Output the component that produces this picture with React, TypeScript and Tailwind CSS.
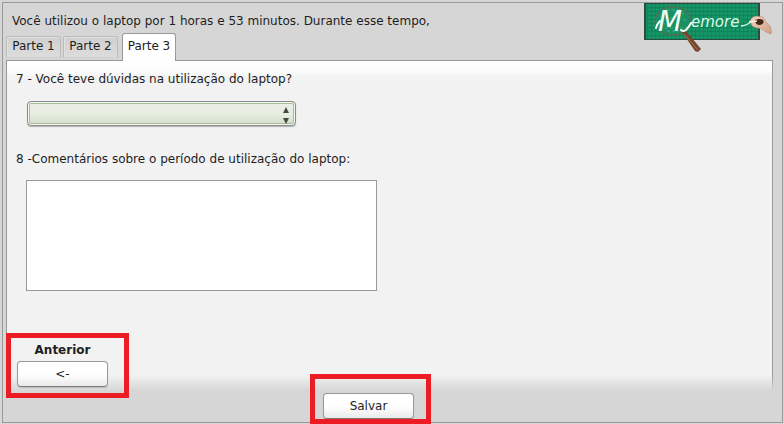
import { useState } from "react";

const tabs = ["Parte 1", "Parte 2"];

const pushButton =
  "h-[26px] w-[91px] rounded-[4px] border border-[#999999] border-b-[#7c7c7c] bg-linear-to-b from-white from-50% to-[#eaeaea] text-[#1e1e1e] shadow-[0_1px_1px_#bdbdbd]";

function Logo() {
  return (
    <svg viewBox="0 0 130 50" className="h-[50px] w-[130px] shrink-0" role="img" aria-label="Memore">
      <defs>
        <pattern id="weave" width="4" height="4" patternUnits="userSpaceOnUse">
          <rect width="4" height="4" fill="#149263" />
          <path d="M0 .5H4M.5 0V4" stroke="#10855b" strokeWidth="1" />
          <path d="M2 2.5H4" stroke="#1c9c6d" strokeWidth="1" />
        </pattern>
        <linearGradient id="skin" x1="0" y1="0" x2="1" y2="1">
          <stop offset="0" stopColor="#f3d3bf" />
          <stop offset="1" stopColor="#cf9f87" />
        </linearGradient>
      </defs>
      <rect x="1" y="0" width="116" height="37" fill="#2c4a3e" />
      <rect x="3" y="1" width="112" height="35" fill="url(#weave)" />
      <ellipse cx="30" cy="18" rx="18" ry="14" fill="#198f64" stroke="#4d7352" strokeWidth="1.4" />
      <g fill="none" stroke="#4aa880" strokeWidth="1" strokeDasharray="3 2">
        <path d="M24 7H37M34 11H41M27 15H32M40 17H43M16 21H22M17 25H44M24 28H36" />
      </g>
      <path d="M39 29 L43 28 L58 46 L55 49 L52 48 Z" fill="#74472c" />
      <path d="M41 31 L55 47" stroke="#a3714d" strokeWidth="1" />
      <text
        x="15"
        y="28"
        fill="#effff6"
        fontSize="28"
        fontStyle="italic"
        style={{ fontFamily: '"DejaVu Sans", sans-serif' }}
      >
        M
      </text>
      <path
        d="M13 25 Q14 21 17 18M38 27 Q40 29 43 27 Q46 24 48 20"
        fill="none"
        stroke="#effff6"
        strokeWidth="2"
        strokeLinecap="round"
      />
      <text
        x="48"
        y="24"
        fill="#dcfaea"
        fontSize="15"
        fontStyle="italic"
        style={{ fontFamily: '"DejaVu Sans", sans-serif' }}
      >
        emore
      </text>
      <path d="M98 23 Q103 23 109 18" fill="none" stroke="#dcfaea" strokeWidth="1.4" />
      <path
        d="M107 18 Q108 14 113 13 L120 14 L123 19 L127 23 Q129 26 128 31 L123 29 Q119 25 114 25 Q108 24 108 20 Z"
        fill="url(#skin)"
        stroke="#a9806d"
        strokeWidth=".5"
      />
      <path d="M112 17 Q117 15 120 17 Q122 21 117 22 Q112 22 112 17 Z" fill="#49261c" />
      <path d="M106 19 L114 18" stroke="#fff3e8" strokeWidth="1.5" />
    </svg>
  );
}

export default function App() {
  const [answer, setAnswer] = useState("");
  const [comments, setComments] = useState("");

  return (
    <div className="bg-[#d6d6d6] pt-[2px] pb-px pl-[2px] font-['DejaVu_Sans',sans-serif] text-[12px] leading-4 text-[#1e1e1e]">
      <main className="border border-[#999999] pr-[9px] pb-[3px] pl-[3px]">
        <header className="flex h-[57px] items-start justify-between">
          <div className="flex h-full flex-col justify-between">
            <p className="pt-[10px] pl-[6px]">
              Você utilizou o laptop por 1 horas e 53 minutos. Durante esse tempo,
            </p>
            <div role="tablist" className="-mt-1 flex items-end gap-[2px]">
              {tabs.map((tab) => (
                <button
                  key={tab}
                  type="button"
                  role="tab"
                  aria-selected={false}
                  className="mb-[2px] h-[22px] w-[55px] rounded-t-[2px] border border-[#bcbcbc] border-b-transparent bg-linear-to-b from-[#d0d0d0] to-[#dcdcdc] pb-[2px] shadow-[inset_1px_1px_0_#e0e0e0]"
                >
                  {tab}
                </button>
              ))}
              <button
                type="button"
                role="tab"
                aria-selected={true}
                className="relative -mb-px ml-[2px] h-[28px] w-[54px] rounded-t-[3px] border border-b-0 border-[#999999] bg-white pb-1"
              >
                Parte 3
              </button>
            </div>
          </div>
          <Logo />
        </header>

        <div className="bg-linear-to-b from-[#999999] from-95% to-[#d6d6d6] px-px pt-px">
          <section
            role="tabpanel"
            aria-label="Parte 3"
            className="bg-[linear-gradient(to_bottom,#ffffff_0,#fcfcfc_10px,#f2f2f2_16px,#f2f2f2_calc(100%-16px),#d6d6d6_100%)] px-[9px] pt-[10px] pb-[4px]"
          >
            <label htmlFor="doubts" className="block">
              7 - Você teve dúvidas na utilização do laptop?
            </label>
            <div className="relative mt-[14px] ml-[11px] w-[269px]">
              <select
                id="doubts"
                value={answer}
                onChange={(event) => setAnswer(event.target.value)}
                className="block h-[25px] w-full appearance-none rounded-[4px] border border-[#8c8c8c] bg-linear-to-b from-[#e8efe2] from-50% to-[#d3dccb] px-2 shadow-[inset_0_0_0_1px_#f4f7f1,inset_0_0_0_2px_#a9bd98,0_1px_1px_#b0b0b0]"
              >
                <option value=""></option>
                <option value="sim">Sim</option>
                <option value="nao">Não</option>
              </select>
              <svg
                viewBox="0 0 6 18"
                className="pointer-events-none absolute top-[6px] right-[7px] h-[18px] w-[6px]"
                fill="#454a42"
                aria-hidden="true"
              >
                <path d="M3 0 L6 6 H0 Z M3 17 L6 11 H0 Z" />
              </svg>
            </div>

            <label htmlFor="comments" className="mt-[25px] block">
              8 -Comentários sobre o período de utilização do laptop:
            </label>
            <textarea
              id="comments"
              value={comments}
              onChange={(event) => setComments(event.target.value)}
              className="mt-[13px] ml-[10px] block h-[111px] w-[351px] resize-none border border-[#999999] bg-white p-1 outline-none"
            />

            <div className="relative mt-[51px] ml-px flex w-[91px] flex-col items-center gap-[3px]">
              <label htmlFor="previous" className="font-bold">
                Anterior
              </label>
              <button id="previous" type="button" className={pushButton}>
                &lt;-
              </button>
              <span className="pointer-events-none absolute -top-[9px] -right-[21px] -bottom-[11px] -left-[11px] border-[5px] border-[#ed1c24]" />
            </div>
          </section>
        </div>

        <div className="flex justify-center pt-[2px] pr-[42px]">
          <div className="relative">
            <button type="button" className={pushButton}>
              Salvar
            </button>
            <span className="pointer-events-none absolute -top-[19px] -right-[17px] -bottom-[5px] -left-[13px] border-[5px] border-[#ed1c24]" />
          </div>
        </div>
      </main>
    </div>
  );
}
